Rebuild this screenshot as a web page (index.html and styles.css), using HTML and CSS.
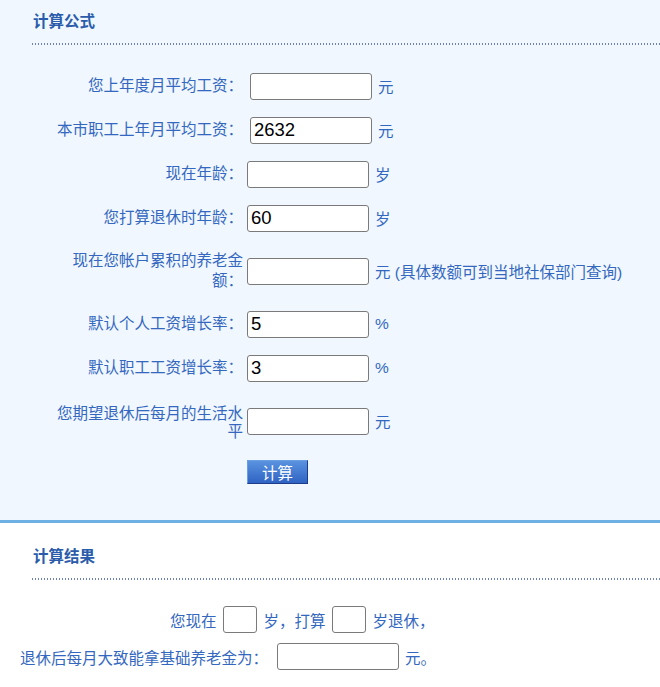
FILE: index.html
```html
<!DOCTYPE html>
<html lang="zh-CN">
<head>
<meta charset="utf-8">
<title>养老金计算</title>
<link rel="stylesheet" href="styles.css">
</head>
<body>
<section class="panel panel-top">
  <h2 class="title">计算公式</h2>
  <div class="dots"></div>
  <form class="form">
    <div class="row">
      <label class="lbl">您上年度月平均工资：</label>
      <input class="box shift" type="text" value="">
      <span class="unit">元</span>
    </div>
    <div class="row">
      <label class="lbl">本市职工上年月平均工资：</label>
      <input class="box shift" type="text" value="2632">
      <span class="unit">元</span>
    </div>
    <div class="row">
      <label class="lbl">现在年龄：</label>
      <input class="box" type="text" value="">
      <span class="unit">岁</span>
    </div>
    <div class="row">
      <label class="lbl">您打算退休时年龄：</label>
      <input class="box" type="text" value="60">
      <span class="unit">岁</span>
    </div>
    <div class="row tall">
      <label class="lbl">现在您帐户累积的养老金额：</label>
      <input class="box" type="text" value="">
      <span class="unit">元 (具体数额可到当地社保部门查询)</span>
    </div>
    <div class="row">
      <label class="lbl">默认个人工资增长率：</label>
      <input class="box" type="text" value="5">
      <span class="unit">%</span>
    </div>
    <div class="row">
      <label class="lbl">默认职工工资增长率：</label>
      <input class="box" type="text" value="3">
      <span class="unit">%</span>
    </div>
    <div class="row tall">
      <label class="lbl lbl-tight">您期望退休后每月的生活水平</label>
      <input class="box" type="text" value="">
      <span class="unit">元</span>
    </div>
    <div class="row btn-row">
      <span class="lbl"></span>
      <button class="btn" type="button">计算</button>
    </div>
  </form>
</section>
<section class="panel panel-bottom">
  <h2 class="title">计算结果</h2>
  <div class="dots"></div>
  <div class="result">
    <div class="res-line res-first">
      <span>您现在</span>
      <input class="box small" type="text" value="">
      <span class="t-after">岁，打算</span>
      <input class="box small" type="text" value="">
      <span class="t-after">岁退休，</span>
    </div>
    <div class="res-line res-second">
      <span>退休后每月大致能拿基础养老金为：</span>
      <input class="box wide" type="text" value="">
      <span class="t-after2">元。</span>
    </div>
  </div>
</section>
</body>
</html>
```
FILE: styles.css
```css
html, body {
  margin: 0;
  padding: 0;
  background: #ffffff;
}
body {
  font-family: "Liberation Sans", "Noto Sans CJK SC", sans-serif;
  font-size: 15.5px;
  color: #3468c0;
}
.panel-top {
  background: #f0f7fe;
  border-bottom: 3px solid #6cb0e4;
  padding: 12px 0 28px 0;
}
.panel-bottom {
  padding: 24px 0 0 0;
}
.title {
  margin: 0 0 11px 0;
  padding-left: 33px;
  font-size: 15.5px;
  line-height: 20px;
  font-weight: bold;
  color: #2b5cab;
}
.dots {
  margin-left: 32px;
  height: 2px;
  background-image: repeating-linear-gradient(90deg, #6f82b8 0, #6f82b8 1.5px, transparent 1.5px, transparent 3px);
}
.form {
  margin-top: 19px;
  padding-left: 53px;
}
.row {
  display: grid;
  grid-template-columns: 190px auto 1fr;
  align-items: center;
  min-height: 44px;
}
.row.tall {
  min-height: 62px;
}
.btn-row {
  min-height: 40px;
}
.lbl {
  text-align: right;
  line-height: 20px;
}
.lbl-tight {
  line-height: 18px;
  padding-top: 4px;
}
.box {
  box-sizing: border-box;
  width: 122px;
  height: 27px;
  margin: 0 0 0 4px;
  padding: 0 3px;
  border: 1px solid #7a7a7a;
  border-radius: 3px;
  background: #ffffff;
  font-family: "Liberation Sans", sans-serif;
  font-size: 18.5px;
  color: #000000;
  outline: none;
}
.box.shift {
  margin-left: 7px;
}
.unit {
  margin-left: 6px;
  white-space: nowrap;
}
.btn {
  justify-self: start;
  margin-left: 4px;
  width: 61px;
  height: 24px;
  padding: 0;
  border: 1px solid #2a52a8;
  border-top-color: #6c9ce2;
  border-left-color: #6c9ce2;
  border-bottom-color: #1d3d8a;
  border-right-color: #1d3d8a;
  background: linear-gradient(#5a93e0, #2f63c3);
  color: #ffffff;
  font-family: "Noto Sans CJK SC", sans-serif;
  font-size: 15.5px;
  line-height: 22px;
}
.result {
  margin-top: 21px;
}
.res-line {
  display: flex;
  align-items: center;
  height: 37px;
}
.res-first {
  padding-left: 170px;
}
.res-second {
  padding-left: 20px;
}
.box.small {
  width: 34px;
  margin-left: 6px;
}
.box.wide {
  margin-left: 9px;
}
.t-after {
  margin-left: 7px;
}
.t-after2 {
  margin-left: 6px;
}
```
